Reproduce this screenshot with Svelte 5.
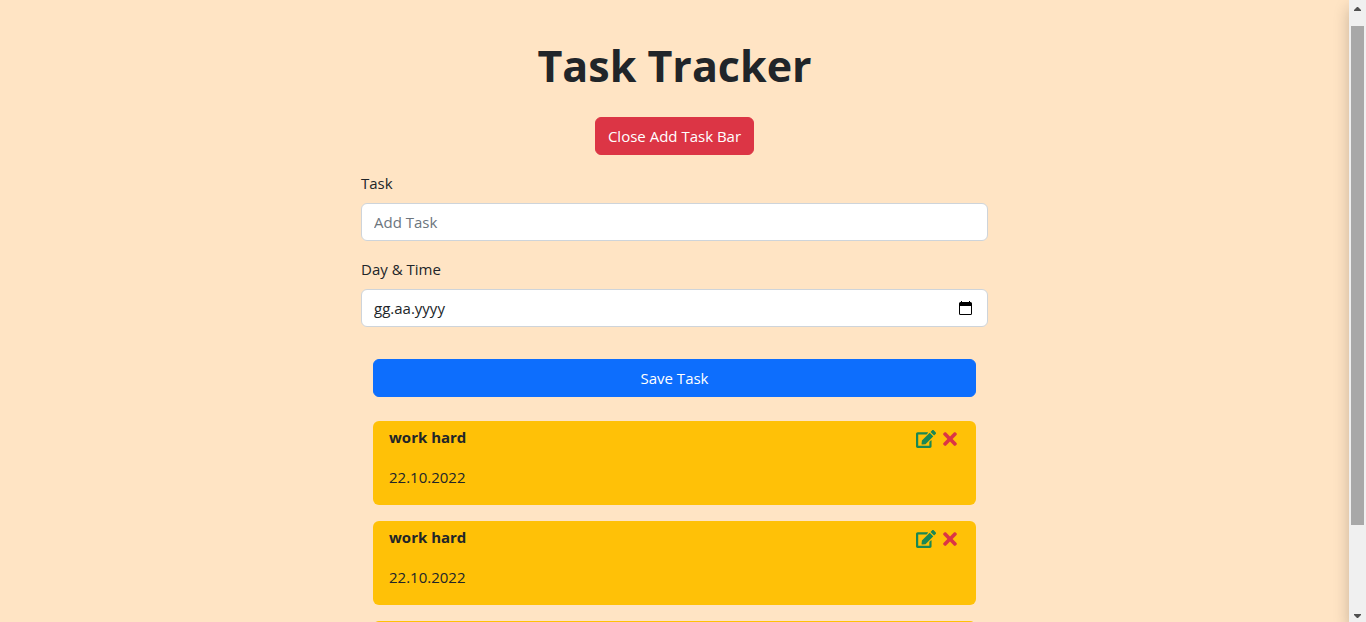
<script>
  let open = $state(true);
  let text = $state('');
  let day = $state('');
  let tasks = $state([
    { id: 1, text: 'work hard', day: '22.10.2022' },
    { id: 2, text: 'work hard', day: '22.10.2022' },
    { id: 3, text: 'work hard', day: '22.10.2022' }
  ]);

  function save(event) {
    event.preventDefault();
    if (!text || !day) return;
    tasks.push({ id: Date.now(), text, day });
    text = '';
    day = '';
  }

  function edit(task) {
    text = task.text;
    day = task.day;
    remove(task.id);
  }

  function remove(id) {
    tasks = tasks.filter((task) => task.id !== id);
  }
</script>

<div class="window">
  <main class="page">
    <div class="column">
      <header>
        <h1>Task Tracker</h1>
        <button class="btn toggle" type="button" onclick={() => (open = !open)}>
          {open ? 'Close' : 'Show'} Add Task Bar
        </button>
      </header>

      {#if open}
        <form onsubmit={save}>
          <label for="task">Task</label>
          <input id="task" class="field" type="text" placeholder="Add Task" bind:value={text} />

          <label for="day">Day &amp; Time</label>
          <div class="field date">
            <input id="day" type="text" placeholder="gg.aa.yyyy" bind:value={day} />
            <button class="icon" type="button" aria-label="Open calendar">
              <svg width="13" height="14" viewBox="0 0 13 14" aria-hidden="true">
                <path fill="#000" fill-rule="evenodd" d="M2 0h1v1h7V0h1v1h.5A1.500 1.500 0 0 1 13 2.500V12.500A1.500 1.500 0 0 1 11.500 14h-10A1.500 1.500 0 0 1 0 12.500v-10A1.500 1.500 0 0 1 1.500 1H2zM1 5v7.500q0 .5.5.5h10q.5 0 .5-.5V5z" />
              </svg>
            </button>
          </div>

          <button class="btn save" type="submit">Save Task</button>
        </form>
      {/if}

      <ul>
        {#each tasks as task (task.id)}
          <li>
            <div class="row">
              <h2>{task.text}</h2>
              <div class="actions">
                <button class="icon edit" type="button" aria-label="Edit task" onclick={() => edit(task)}>
                  <svg width="20" height="18" viewBox="0 0 576 512" aria-hidden="true">
                    <path fill="currentColor" d="M402.600 83.200l90.200 90.200c3.800 3.800 3.800 10 0 13.800L274.400 405.600l-92.800 10.300c-12.400 1.400-22.900-9.100-21.500-21.500l10.300-92.800L388.800 83.200c3.800-3.800 10-3.800 13.800 0zm162-22.900l-48.800-48.800c-15.200-15.200-39.900-15.200-55.200 0l-35.400 35.400c-3.800 3.800-3.800 10 0 13.800l90.200 90.200c3.800 3.800 10 3.800 13.800 0l35.400-35.400c15.200-15.300 15.200-40 0-55.200zM384 346.200V448H64V128h229.800c3.200 0 6.200-1.300 8.500-3.500l40-40c7.600-7.600 2.200-20.500-8.500-20.500H48C21.500 64 0 85.500 0 112v352c0 26.500 21.500 48 48 48h352c26.500 0 48-21.500 48-48V306.200c0-10.700-12.900-16-20.500-8.500l-40 40c-2.200 2.300-3.500 5.300-3.500 8.500z" />
                  </svg>
                </button>
                <button class="icon delete" type="button" aria-label="Delete task" onclick={() => remove(task.id)}>
                  <svg width="14" height="20" viewBox="0 0 352 512" aria-hidden="true">
                    <path fill="currentColor" d="M242.720 256l100.070-100.070c12.280-12.280 12.280-32.190 0-44.480l-22.240-22.240c-12.280-12.280-32.190-12.280-44.480 0L176 189.280 75.930 89.210c-12.280-12.280-32.190-12.280-44.480 0L9.210 111.450c-12.280 12.280-12.280 32.190 0 44.480L109.280 256 9.210 356.070c-12.280 12.280-12.280 32.190 0 44.480l22.240 22.240c12.280 12.280 32.200 12.280 44.480 0L176 322.720l100.070 100.070c12.280 12.280 32.200 12.280 44.480 0l22.240-22.240c12.280-12.280 12.280-32.190 0-44.480L242.720 256z" />
                  </svg>
                </button>
              </div>
            </div>
            <p>{task.day}</p>
          </li>
        {/each}
      </ul>
    </div>
  </main>

  <div class="scrollbar" aria-hidden="true">
    <svg width="7" height="4" viewBox="0 0 7 4"><path fill="#505050" d="M3 0h1l3 3v1H0V3z" /></svg>
    <div class="track"><div class="thumb"></div></div>
    <svg width="7" height="4" viewBox="0 0 7 4"><path fill="#505050" d="M0 0h7v1L4 4H3L0 1z" /></svg>
  </div>
</div>

<style>
  :global(body) {
    margin: 0;
    background: #ffe4c4;
  }

  .window {
    display: flex;
    height: 100vh;
    overflow: hidden;
    color: #212529;
    font-family: 'Segoe UI', 'Open Sans', 'Noto Sans', sans-serif;
    font-size: 15px;
    line-height: 24px;
  }

  .window * {
    box-sizing: border-box;
  }

  .page {
    flex: 1;
    min-width: 0;
    overflow: hidden;
  }

  .column {
    max-width: 627px;
    margin: 0 auto;
    padding-top: 37px;
  }

  header {
    display: flex;
    flex-direction: column;
    align-items: center;
    gap: 22px;
  }

  h1 {
    margin: 0;
    font-size: 43px;
    font-weight: 700;
    line-height: 58px;
  }

  button,
  input {
    font: inherit;
  }

  .btn {
    height: 38px;
    padding: 0 12px;
    border: 1px solid transparent;
    border-radius: 6px;
    color: #fff;
    cursor: pointer;
  }

  .toggle {
    background: #dc3545;
    border-color: #dc3545;
  }

  form {
    display: flex;
    flex-direction: column;
    padding-top: 16px;
  }

  label {
    margin-bottom: 8px;
  }

  .field {
    height: 38px;
    margin: 0 0 16px;
    padding: 0 12px;
    border: 1px solid #ced4da;
    border-radius: 6px;
    background: #fff;
    color: #212529;
  }

  .field::placeholder {
    color: #6c757d;
    opacity: 1;
  }

  .date {
    display: flex;
    align-items: center;
    padding-right: 15px;
  }

  .date input {
    flex: 1;
    min-width: 0;
    padding: 0;
    border: 0;
    outline: 0;
    background: none;
    color: inherit;
  }

  .date input::placeholder {
    color: #212529;
    opacity: 1;
  }

  .icon {
    display: flex;
    padding: 0;
    border: 0;
    background: none;
    cursor: pointer;
  }

  .save {
    margin: 16px 12px 0;
    background: #0d6efd;
    border-color: #0d6efd;
  }

  ul {
    display: flex;
    flex-direction: column;
    gap: 16px;
    margin: 24px 12px 16px;
    padding: 0;
    list-style: none;
  }

  li {
    padding: 4px 16px 16px;
    border-radius: 6px;
    background: #ffc107;
  }

  .row {
    display: flex;
    justify-content: space-between;
    margin-bottom: 16px;
  }

  h2,
  p {
    margin: 0;
    font-size: 15px;
    line-height: 24px;
  }

  h2 {
    font-weight: 700;
  }

  .actions {
    display: flex;
    align-items: center;
    gap: 7px;
    padding: 4px 3px 0 0;
  }

  .edit {
    color: #198754;
  }

  .delete {
    color: #dc3545;
  }

  .scrollbar {
    display: flex;
    flex-direction: column;
    align-items: center;
    justify-content: space-between;
    width: 17px;
    padding: 7px 0 4px;
    background: #f0f0f0;
    box-shadow: 0 8px 16px rgb(0 0 0 / 22%);
  }

  .track {
    flex: 1;
    width: 13px;
    margin: 15px 0 8px;
  }

  .thumb {
    height: 86%;
    background: #a8a8a8;
  }
</style>
